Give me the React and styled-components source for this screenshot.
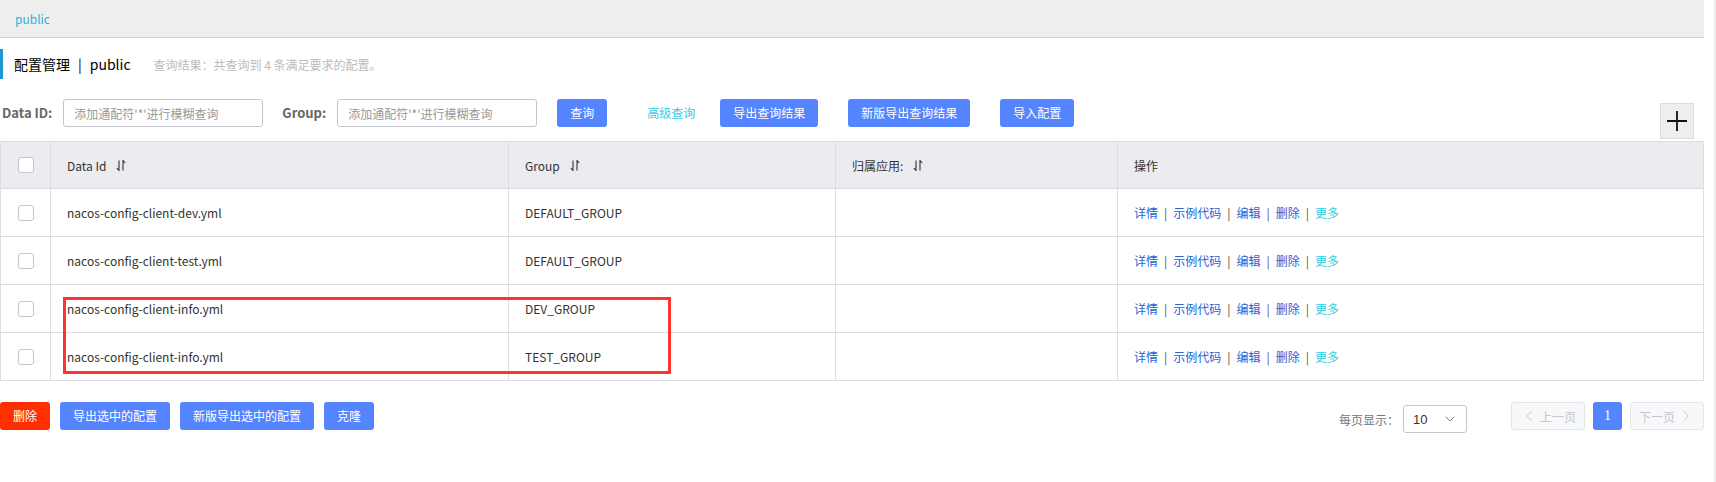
import React from "react";
import styled, { createGlobalStyle } from "styled-components";
import { ChevronDown, ChevronLeft, ChevronRight } from "lucide-react";

const GlobalStyle = createGlobalStyle`
  html, body {
    margin: 0;
    padding: 0;
    background: #fff;
  }
  body {
    font-family: "Noto Sans CJK SC", "Noto Sans", sans-serif;
    font-size: 12px;
    color: #333;
  }
  * {
    box-sizing: border-box;
  }
`;

const rows = [
  { id: "nacos-config-client-dev.yml", group: "DEFAULT_GROUP" },
  { id: "nacos-config-client-test.yml", group: "DEFAULT_GROUP" },
  { id: "nacos-config-client-info.yml", group: "DEV_GROUP" },
  { id: "nacos-config-client-info.yml", group: "TEST_GROUP" },
];

const actions = ["详情", "示例代码", "编辑", "删除"];

const SortIcon = () => (
  <svg width="10" height="11" viewBox="0 0 10 11" fill="none" stroke="#333" strokeWidth="1.1">
    <path d="M3 0.5 V10.5 L0.8 8" />
    <path d="M7 10.5 V0.5 L9.2 3" />
  </svg>
);

const App = () => {
  return (
    <Page>
      <GlobalStyle />
      <Main>
        <TopBar>public</TopBar>

        <TitleRow>
          <Title>
            配置管理<Divider>|</Divider>public
          </Title>
          <Hint>查询结果：共查询到 4 条满足要求的配置。</Hint>
        </TitleRow>

        <SearchRow>
          <Label>Data ID:</Label>
          <Input placeholder="添加通配符'*'进行模糊查询" />
          <Label $gap={19}>Group:</Label>
          <Input placeholder="添加通配符'*'进行模糊查询" />
          <Button $gap={20}>查询</Button>
          <TextButton>高级查询</TextButton>
          <Button $gap={25}>导出查询结果</Button>
          <Button $gap={30}>新版导出查询结果</Button>
          <Button $gap={30}>导入配置</Button>
          <AddButton>
            <svg width="22" height="22" viewBox="0 0 22 22" stroke="#111" strokeWidth="1.8">
              <path d="M11 1 V21 M1 11 H21" />
            </svg>
          </AddButton>
        </SearchRow>

        <Table>
          <HeadRow>
            <CheckCell>
              <Checkbox />
            </CheckCell>
            <Cell>
              Data Id
              <SortWrap>
                <SortIcon />
              </SortWrap>
            </Cell>
            <Cell>
              Group
              <SortWrap>
                <SortIcon />
              </SortWrap>
            </Cell>
            <Cell>
              归属应用:
              <SortWrap>
                <SortIcon />
              </SortWrap>
            </Cell>
            <Cell $last>操作</Cell>
          </HeadRow>

          {rows.map((r, i) => (
            <BodyRow key={i}>
              <CheckCell>
                <Checkbox />
              </CheckCell>
              <Cell>{r.id}</Cell>
              <Cell>{r.group}</Cell>
              <Cell />
              <Cell $last>
                {actions.map((a) => (
                  <React.Fragment key={a}>
                    <ActionLink>{a}</ActionLink>
                    <Sep>|</Sep>
                  </React.Fragment>
                ))}
                <MoreLink>更多</MoreLink>
              </Cell>
            </BodyRow>
          ))}

          <Highlight />
        </Table>

        <Footer>
          <BatchActions>
            <Button $danger>删除</Button>
            <Button $gap={10}>导出选中的配置</Button>
            <Button $gap={10}>新版导出选中的配置</Button>
            <Button $gap={10}>克隆</Button>
          </BatchActions>

          <Pager>
            <PageSize>
              <PageSizeLabel>每页显示：</PageSizeLabel>
              <Select>
                <span>10</span>
                <ChevronDown size={16} strokeWidth={1.3} color="#666" />
              </Select>
            </PageSize>
            <PageNav>
              <NavButton>
                <ChevronLeft size={18} strokeWidth={1.2} />
                上一页
              </NavButton>
              <PageNum>1</PageNum>
              <NavButton>
                下一页
                <ChevronRight size={18} strokeWidth={1.2} />
              </NavButton>
            </PageNav>
          </Pager>
        </Footer>
      </Main>
    </Page>
  );
};

export default App;

const Page = styled.div`
  width: 1716px;
  height: 482px;
  display: flex;
  border-right: 2px solid #ececec;
  overflow: hidden;
`;

const Main = styled.div`
  width: 1704px;
  display: flex;
  flex-direction: column;
`;

const TopBar = styled.div`
  height: 38px;
  background: #eeeeee;
  border-bottom: 1px solid #d2d2d2;
  padding-left: 15px;
  display: flex;
  align-items: center;
  color: #33b1dc;
  font-size: 12px;
`;

const TitleRow = styled.div`
  margin-top: 11px;
  height: 30px;
  border-left: 3px solid #1d9ad6;
  padding-left: 11px;
  display: flex;
  align-items: center;
`;

const Title = styled.div`
  font-size: 14px;
  color: #000;
`;

const Divider = styled.span`
  margin: 0 8px;
`;

const Hint = styled.div`
  margin-left: 23px;
  font-size: 12px;
  color: #bbbbbb;
`;

const SearchRow = styled.div`
  margin-top: 20px;
  height: 42px;
  display: flex;
  align-items: flex-start;
`;

const Label = styled.label`
  margin-left: ${(p) => p.$gap || 2}px;
  margin-right: 11px;
  line-height: 28px;
  font-weight: 700;
  font-size: 13px;
  color: #666;
`;

const Input = styled.input`
  width: 200px;
  height: 28px;
  border: 1px solid #c4c6cf;
  border-radius: 3px;
  padding: 0 10px;
  font-family: inherit;
  font-size: 12px;
  color: #333;
  outline: none;

  &::placeholder {
    color: #999;
  }
`;

const Button = styled.button`
  margin-left: ${(p) => p.$gap || 0}px;
  height: 28px;
  padding: 0 13px;
  border: none;
  border-radius: 3px;
  background: ${(p) => (p.$danger ? "#ff3000" : "#5584ff")};
  color: #fff;
  font-family: inherit;
  font-size: 12px;
  line-height: 28px;
  white-space: nowrap;
  cursor: pointer;
`;

const TextButton = styled.span`
  margin-left: 40px;
  line-height: 28px;
  color: #33cde5;
  font-size: 12px;
`;

const AddButton = styled.div`
  margin-left: auto;
  margin-right: 10px;
  margin-top: 4px;
  width: 34px;
  height: 36px;
  background: #eeeeee;
  border: 1px solid #dddddd;
  display: flex;
  align-items: center;
  justify-content: center;
`;

const Table = styled.div`
  position: relative;
  border-top: 1px solid #dcdee3;
  border-left: 1px solid #dcdee3;
  border-right: 1px solid #dcdee3;
`;

const HeadRow = styled.div`
  display: grid;
  grid-template-columns: 50px 458px 327px 282px 1fr;
  height: 47px;
  background: #ebecf0;
  border-bottom: 1px solid #dcdee3;
`;

const BodyRow = styled(HeadRow)`
  height: 48px;
  background: #fff;
`;

const Cell = styled.div`
  display: flex;
  align-items: center;
  padding: 0 16px;
  border-right: ${(p) => (p.$last ? "none" : "1px solid #dcdee3")};
  font-size: 12px;
  color: #333;
  white-space: nowrap;
`;

const CheckCell = styled(Cell)`
  padding: 0;
  justify-content: center;
`;

const Checkbox = styled.span`
  width: 16px;
  height: 16px;
  border: 1px solid #c4c6cf;
  border-radius: 3px;
  background: #fff;
`;

const SortWrap = styled.span`
  margin-left: 10px;
  display: inline-flex;
  align-items: center;
`;

const ActionLink = styled.a`
  color: #2563d4;
  cursor: pointer;
`;

const MoreLink = styled(ActionLink)`
  color: #33cde5;
`;

const Sep = styled.span`
  margin: 0 6px;
  color: #555;
`;

const Highlight = styled.div`
  position: absolute;
  left: 62px;
  top: 155px;
  width: 608px;
  height: 77px;
  border: 3px solid #ff3333;
  pointer-events: none;
`;

const Footer = styled.div`
  margin-top: 21px;
  display: flex;
  align-items: flex-start;
  justify-content: space-between;
`;

const BatchActions = styled.div`
  display: flex;
`;

const Pager = styled.div`
  display: flex;
  align-items: flex-start;
`;

const PageSize = styled.div`
  margin-top: 3px;
  display: flex;
  align-items: center;
`;

const PageSizeLabel = styled.span`
  color: #777;
  font-size: 12px;
  margin-right: 4px;
`;

const Select = styled.div`
  width: 64px;
  height: 28px;
  border: 1px solid #c4c6cf;
  border-radius: 3px;
  padding: 0 8px 0 9px;
  display: flex;
  align-items: center;
  justify-content: space-between;
  font-family: "Liberation Sans", Arial, sans-serif;
  font-size: 13px;
  color: #333;
`;

const PageNav = styled.div`
  margin-left: 44px;
  display: flex;
  gap: 8px;
`;

const NavButton = styled.div`
  width: 74px;
  height: 28px;
  border: 1px solid #e6e7eb;
  border-radius: 3px;
  background: #f7f8fa;
  color: #c4c6cf;
  font-size: 12px;
  display: flex;
  align-items: center;
  justify-content: center;
  gap: 2px;
`;

const PageNum = styled.div`
  width: 29px;
  height: 28px;
  border-radius: 3px;
  background: #5584ff;
  color: #fff;
  font-family: "Liberation Serif", serif;
  font-size: 14px;
  display: flex;
  align-items: center;
  justify-content: center;
`;
